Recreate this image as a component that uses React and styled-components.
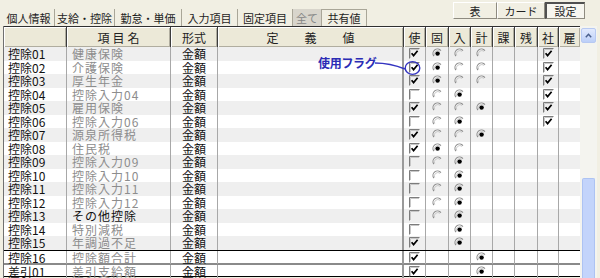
import React from 'react';
import styled, { createGlobalStyle } from 'styled-components';

const GlobalStyle = createGlobalStyle`
  body {
    margin: 0;
    background: #f1efe3;
    font-family: "Noto Sans CJK JP", "Noto Sans", sans-serif;
  }
`;

const COLS = '63px 104px 47px 186px 22px 23px 22px 22px 22px 23px 21px 22px';

const Page = styled.div`
  position: relative;
  width: 600px;
  height: 278px;
  overflow: hidden;
  background: #f1efe3;
`;

const TopBar = styled.div`
  display: flex;
  justify-content: space-between;
  height: 26px;
  padding: 0 15px 0 3px;
`;

const Tabs = styled.div`
  display: flex;
  align-items: flex-end;
`;

const Tab = styled.div`
  width: ${p => p.w}px;
  height: 17px;
  box-sizing: border-box;
  border-right: 1px solid #a9a698;
  border-top: ${p => (p.raised ? '1px solid #a9a698' : 'none')};
  display: flex;
  align-items: center;
  justify-content: center;
  font-size: 11px;
  color: ${p => (p.active ? '#858585' : '#1e1e1e')};
  background: ${p => (p.active ? '#d8d5cc' : 'transparent')};
`;

const Buttons = styled.div`
  display: flex;
  align-items: flex-start;
  padding-top: 2px;
`;

const TopButton = styled.div`
  width: ${p => p.w}px;
  height: 17px;
  box-sizing: border-box;
  display: flex;
  align-items: center;
  justify-content: center;
  font-size: 11px;
  color: #222;
  border-top: ${p => (p.pressed ? '2px solid #505050' : '1px solid #fff')};
  border-left: ${p => (p.pressed ? '2px solid #505050' : '1px solid #fff')};
  border-right: 1px solid #8e8b80;
  border-bottom: 1px solid #8e8b80;
  background: ${p => (p.pressed ? '#f7f6f0' : '#f1efe3')};
`;

const Main = styled.div`
  display: flex;
  padding-left: 3px;
`;

const Table = styled.div`
  width: 577px;
  border-left: 1px solid #707070;
  box-sizing: border-box;
`;

const HeaderRow = styled.div`
  display: grid;
  grid-template-columns: ${COLS};
  height: 21px;
  border-top: 1px solid #303030;
  box-sizing: border-box;
`;

const HeadCell = styled.div`
  display: flex;
  align-items: center;
  justify-content: center;
  background: #ece9d8;
  border-right: 1px solid #3c3c3c;
  box-shadow: inset 1px 1px 0 #ffffff, inset -1px -1px 0 #b0ad9f;
  font-size: 12px;
  color: #222;
  letter-spacing: ${p => p.sp || 0}px;
  padding-left: ${p => p.sp || 0}px;
`;

const Row = styled.div`
  display: grid;
  grid-template-columns: ${COLS};
  height: 13.5px;
  box-sizing: border-box;
  background: ${p => (p.shade ? '#efefef' : '#ffffff')};
  border-top: ${p =>
    p.sep === 'black' ? '1px solid #000' : p.sep === 'grey' ? '2px solid #8a8a8a' : 'none'};
  border-bottom: ${p => (p.last ? '1px solid #000' : 'none')};
`;

const Cell = styled.div`
  display: flex;
  align-items: center;
  justify-content: ${p => (p.center ? 'center' : 'flex-start')};
  padding-left: ${p => p.pl || 0}px;
  border-right: ${p => (p.thick ? '2px solid #9a9a9a' : '1px solid #a8a8a8')};
  font-size: 12px;
  line-height: 13px;
  letter-spacing: ${p => (p.ls ? 1 : 0)}px;
  color: ${p => (p.dim ? '#8d8d8d' : '#111')};
  white-space: nowrap;
`;

const ScrollBar = styled.div`
  width: 17px;
  height: 252px;
  display: flex;
  flex-direction: column;
  align-items: center;
  background: #f4f4ef;
`;

const ScrollUp = styled.div`
  margin-top: 2px;
  width: 15px;
  height: 15px;
  box-sizing: border-box;
  border: 1px solid #b7c9f2;
  border-radius: 2px;
  background: linear-gradient(#e2eafd, #bccff8);
  display: flex;
  align-items: center;
  justify-content: center;
`;

const Thumb = styled.div`
  margin-top: auto;
  width: 13px;
  height: 100px;
  box-sizing: border-box;
  border: 1px solid #adc3f3;
  border-bottom: none;
  border-radius: 2px 2px 0 0;
  background: #c3d4fb;
`;

const Note = styled.span`
  position: absolute;
  left: 318px;
  top: 54px;
  font-size: 12px;
  font-weight: bold;
  color: #2c2cb5;
  letter-spacing: -0.3px;
`;

const NoteArrow = styled.svg`
  position: absolute;
  left: 370px;
  top: 56px;
`;

const CheckBox = ({ on }) => (
  <svg width="11" height="11" viewBox="0 0 11 11">
    <path d="M0.5 10.5 V0.5 H10.5" fill="none" stroke="#7c7c7c" strokeWidth="1" />
    <path d="M1.5 10 V1.5 H10" fill="none" stroke="#c8c8c8" strokeWidth="1" />
    {on && (
      <path d="M2.6 5.2 L4.6 7.6 L8.6 2.8" fill="none" stroke="#000" strokeWidth="1.7" />
    )}
  </svg>
);

const Radio = ({ on }) => (
  <svg width="11" height="11" viewBox="0 0 11 11">
    <path d="M8.95 2.61 A4.5 4.5 0 0 0 1.81 8.08" fill="none" stroke="#8a8a8a" strokeWidth="1.1" />
    <path d="M8.1 3.4 A3.5 3.5 0 0 0 2.7 7.6" fill="none" stroke="#c4c4c4" strokeWidth="0.9" />
    {on && <circle cx="5.6" cy="5.6" r="2.2" fill="#000" />}
  </svg>
);

const tabs = [
  { label: '個人情報', w: 52 },
  { label: '支給・控除', w: 60 },
  { label: '勤怠・単価', w: 67 },
  { label: '入力項目', w: 56 },
  { label: '固定項目', w: 55 },
  { label: '全て', w: 29, active: true },
  { label: '共有値', w: 45, raised: true },
];

const heads = [
  { t: '' },
  { t: '項目名', sp: 3 },
  { t: '形式' },
  { t: '定義値', sp: 26 },
  { t: '使' }, { t: '固' }, { t: '入' }, { t: '計' },
  { t: '課' }, { t: '残' }, { t: '社' }, { t: '雇' },
];

const rows = [
  { code: '控除01', name: '健康保険', use: true, ko: 1, nyu: 0, kei: 0, sha: true },
  { code: '控除02', name: '介護保険', use: true, ko: 1, nyu: 0, kei: 0, sha: true },
  { code: '控除03', name: '厚生年金', use: true, ko: 1, nyu: 0, kei: 0, sha: true },
  { code: '控除04', name: '控除入力04', use: false, ko: 0, nyu: 1, sha: true },
  { code: '控除05', name: '雇用保険', use: true, ko: 0, nyu: 0, kei: 1, sha: true },
  { code: '控除06', name: '控除入力06', use: false, ko: 0, nyu: 1, sha: true },
  { code: '控除07', name: '源泉所得税', use: true, ko: 0, nyu: 0, kei: 1 },
  { code: '控除08', name: '住民税', use: true, ko: 1, nyu: 0 },
  { code: '控除09', name: '控除入力09', use: false, ko: 0, nyu: 1 },
  { code: '控除10', name: '控除入力10', use: false, ko: 0, nyu: 1 },
  { code: '控除11', name: '控除入力11', use: false, ko: 0, nyu: 1 },
  { code: '控除12', name: '控除入力12', use: false, ko: 0, nyu: 1 },
  { code: '控除13', name: 'その他控除', dark: true, use: false, ko: 0, nyu: 1 },
  { code: '控除14', name: '特別減税', use: false, nyu: 1 },
  { code: '控除15', name: '年調過不足', use: true, nyu: 1 },
  { code: '控除16', name: '控除額合計', use: true, kei: 1, sep: 'black' },
  { code: '差引01', name: '差引支給額', use: true, kei: 1, sep: 'grey', last: true },
];

const radioCell = v => (v === undefined ? null : <Radio on={v === 1} />);

const App = () => {
  return (
    <Page>
      <GlobalStyle />
      <TopBar>
        <Tabs>
          {tabs.map(t => (
            <Tab key={t.label} w={t.w} active={t.active} raised={t.raised}>
              {t.label}
            </Tab>
          ))}
        </Tabs>
        <Buttons>
          <TopButton w={44}>表</TopButton>
          <TopButton w={48}>カード</TopButton>
          <TopButton w={40} pressed>設定</TopButton>
        </Buttons>
      </TopBar>

      <Main>
        <Table>
          <HeaderRow>
            {heads.map((h, i) => (
              <HeadCell key={i} sp={h.sp}>{h.t}</HeadCell>
            ))}
          </HeaderRow>
          {rows.map((r, i) => (
            <Row key={r.code} shade={i % 2 === 0 && !r.sep} sep={r.sep} last={r.last}>
              <Cell pl={4}>{r.code}</Cell>
              <Cell pl={5} ls dim={!r.dark}>{r.name}</Cell>
              <Cell center>金額</Cell>
              <Cell thick />
              <Cell center><CheckBox on={r.use} /></Cell>
              <Cell center>{radioCell(r.ko)}</Cell>
              <Cell center>{radioCell(r.nyu)}</Cell>
              <Cell center>{radioCell(r.kei)}</Cell>
              <Cell />
              <Cell />
              <Cell center>{r.sha && <CheckBox on />}</Cell>
              <Cell />
            </Row>
          ))}
        </Table>
        <ScrollBar>
          <ScrollUp>
            <svg width="7" height="5" viewBox="0 0 7 5">
              <path d="M0.8 4.2 L3.5 1.3 L6.2 4.2" fill="none" stroke="#4a5f8c" strokeWidth="1.5" />
            </svg>
          </ScrollUp>
          <Thumb />
        </ScrollBar>
      </Main>

      <Note>使用フラグ</Note>
      <NoteArrow width="56" height="22" viewBox="0 0 56 22">
        <path d="M5 7 Q20 7 35 13" fill="none" stroke="#3434c0" strokeWidth="1.4" />
        <ellipse cx="42.5" cy="12" rx="7.3" ry="6.4" fill="none" stroke="#3434c0" strokeWidth="1.4" />
      </NoteArrow>
    </Page>
  );
};

export default App;
